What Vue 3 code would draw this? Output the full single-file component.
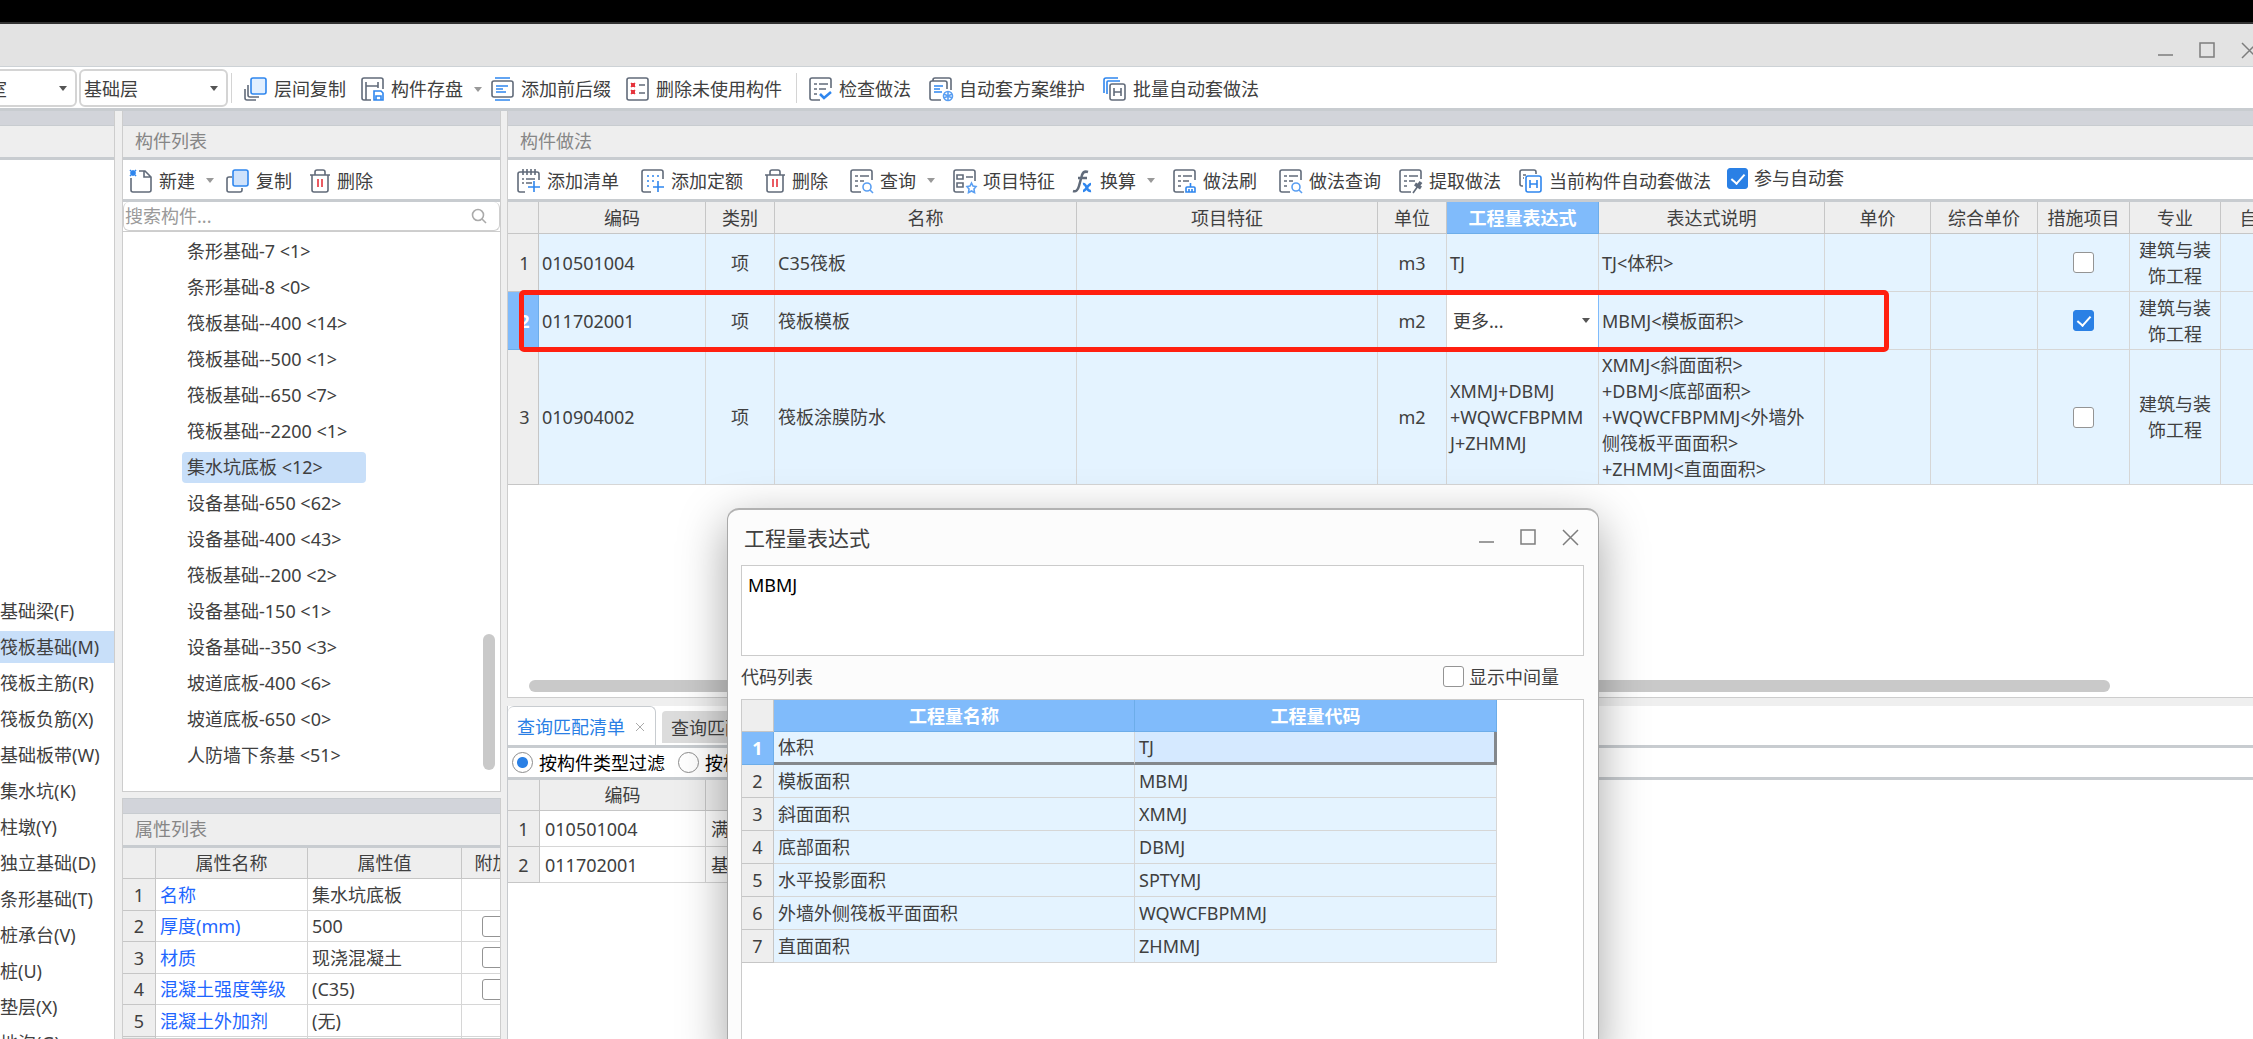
<script setup>
import { ref } from 'vue'

const icons = {
  layers: '<path d="M1 12v9a2 2 0 0 0 2 2h9M4 8v10a2 2 0 0 0 2 2h9" class="g"/><rect x="7" y="1" width="15" height="16" rx="2" class="b" fill="#e1efff"/>',
  save: '<path d="M22 12V3a2 2 0 0 0-2-2H3a2 2 0 0 0-2 2v18a2 2 0 0 0 2 2h7M5 5v18M5 9h12M17 5v6" class="g"/><path d="M13 14h7l2 2v7h-9zM15 23v-4h5v4" class="b"/>',
  affix: '<rect x="1" y="4" width="21" height="16" rx="2" class="g"/><path d="M4 1h15M4 23h15M5 9h12M5 12h7M5 15h10" class="b"/>',
  unused: '<rect x="1" y="1" width="21" height="22" rx="2" class="g"/><path d="M13 8h6M13 16h6" class="g"/><path d="M5 6l4 4M9 6l-4 4M5 8h4M7 6v4M5 13l4 4M9 13l-4 4M5 15h4M7 13v4" class="r"/>',
  check: '<path d="M22 11V3a2 2 0 0 0-2-2H3a2 2 0 0 0-2 2v18a2 2 0 0 0 2 2h8M5 7h3M5 12h3M5 17h3M10 7h9M10 12h7" class="g"/><path d="M11 17l4 4 7-6" class="b thick"/>',
  plan: '<path d="M4 4V3a2 2 0 0 1 2-2h14a2 2 0 0 1 2 2v10M18 12V6a2 2 0 0 0-2-2H3a2 2 0 0 0-2 2v15a2 2 0 0 0 2 2h9" class="g"/><path d="M5 9h9M5 12h6M5 15h8" class="b"/><circle cx="19" cy="19" r="4.5" class="l"/><path d="M19 14v10M15 17l8 4M23 17l-8 4" class="l"/>',
  batch: '<path d="M1 16V3a2 2 0 0 1 2-2h12M4 17V5a1 1 0 0 1 1-1h12" class="b"/><rect x="7" y="7" width="15" height="16" rx="2" class="g" fill="#fff"/><path d="M11 11v8M18 11v8M11 15h7" class="g"/>',
  create: '<path d="M2 9v12a2 2 0 0 0 2 2h16a2 2 0 0 0 2-2V8l-6-6H10M15 2v6h7" class="g"/><path d="M1 1l6 6M7 1L1 7M4 1v6M1 4h6" class="b"/>',
  copy: '<path d="M6 8H3a2 2 0 0 0-2 2v11a2 2 0 0 0 2 2h11a2 2 0 0 0 2-2v-2" class="g"/><rect x="7" y="1" width="15" height="16" rx="2" class="b" fill="#cfe2fb"/>',
  trash: '<path d="M0 6h20M5 6V3a2 2 0 0 1 2-2h6a2 2 0 0 1 2 2v3M2 6v15a2 2 0 0 0 2 2h12a2 2 0 0 0 2-2V6" class="g"/><path d="M8 10v8M12 10v8" class="r"/>',
  addList: '<path d="M22 11V5a2 2 0 0 0-2-2H3a2 2 0 0 0-2 2v16a2 2 0 0 0 2 2h5M6 0v6M10 0v6M14 0v6M18 0v6M5 10h2M9 10h9M5 14h2M9 14h6" class="g"/><path d="M17 12v11M11 18h12" class="b"/>',
  addQuota: '<path d="M22 10V3a2 2 0 0 0-2-2H3a2 2 0 0 0-2 2v18a2 2 0 0 0 2 2h7" class="g"/><path d="M17 12v11M12 18h11M6 7h2M11 7h2M16 7h2M6 12h2M11 12h2M6 17h2" class="b"/>',
  query: '<path d="M22 11V3a2 2 0 0 0-2-2H3a2 2 0 0 0-2 2v18a2 2 0 0 0 2 2h8M5 7h3M5 12h3M5 17h3M10 7h9M10 12h4" class="g"/><circle cx="17" cy="18" r="4" class="l"/><path d="M20 21l3 3" class="l"/>',
  feature: '<path d="M22 12V3a2 2 0 0 0-2-2H3a2 2 0 0 0-2 2v18a2 2 0 0 0 2 2h8M13 8h7" class="g"/><path d="M4 6h6v4H4zM4 14h6v4H4z" class="g"/><path d="M18.500 14l1.500 3 3 .5-2 2.500.5 3.500-3-1.500-3 1.500.5-3.500-2-2.500 3-.5z" class="l"/>',
  brush: '<path d="M22 11V3a2 2 0 0 0-2-2H3a2 2 0 0 0-2 2v18a2 2 0 0 0 2 2h8M5 7h3M5 12h3M5 17h3M10 7h9M10 12h6" class="g"/><path d="M17.500 14v4M13 23v-4a1 1 0 0 1 1-1h7a1 1 0 0 1 1 1v4zM16 20v3M19 20v3" class="b"/>',
  pick: '<path d="M22 10V3a2 2 0 0 0-2-2H3a2 2 0 0 0-2 2v18a2 2 0 0 0 2 2h9M5 7h3M5 12h3M5 17h3M10 7h9M10 12h6" class="g"/><path d="M14 24l5-7" class="g"/><path d="M16 15l6 4M19 17l3-4" class="g thicker"/>',
  current: '<path d="M17 5V3a2 2 0 0 0-2-2H3a2 2 0 0 0-2 2v12a2 2 0 0 0 2 2h1M4 6h3M4 9h1" class="g"/><rect x="7" y="7" width="15" height="16" rx="2" class="b" fill="#fff"/><path d="M11 11v8M18 11v8M11 15h7" class="b"/>',
  fx: '<path d="M0 22c3 1 5-1 6-5l3-11c1-3 3-4 6-3M5 9h9" class="g thick"/><path d="M10 15c4-1 3 8 8 7M18 15c-3 0-5 7-8 7" class="b thick"/>',
}

const topA = [
  { icon: 'layers', text: '层间复制' },
  { icon: 'save', text: '构件存盘', drop: true },
  { icon: 'affix', text: '添加前后缀' },
  { icon: 'unused', text: '删除未使用构件' },
]
const topB = [
  { icon: 'check', text: '检查做法' },
  { icon: 'plan', text: '自动套方案维护' },
  { icon: 'batch', text: '批量自动套做法' },
]
const listTools = [
  { icon: 'create', text: '新建', drop: true },
  { icon: 'copy', text: '复制' },
  { icon: 'trash', text: '删除', w: 20 },
]
const mainTools = [
  { icon: 'addList', text: '添加清单', wide: true },
  { icon: 'addQuota', text: '添加定额', wide: true },
  { icon: 'trash', text: '删除', w: 20, wide: true },
  { icon: 'query', text: '查询', drop: true },
  { icon: 'feature', text: '项目特征' },
  { icon: 'fx', text: '换算', drop: true, w: 20 },
  { icon: 'brush', text: '做法刷', wide: true },
  { icon: 'query', text: '做法查询' },
  { icon: 'pick', text: '提取做法' },
  { icon: 'current', text: '当前构件自动套做法' },
]

const types = ['基础梁(F)', '筏板基础(M)', '筏板主筋(R)', '筏板负筋(X)', '基础板带(W)', '集水坑(K)', '柱墩(Y)', '独立基础(D)', '条形基础(T)', '桩承台(V)', '桩(U)', '垫层(X)', '地沟(G)']
const members = ['条形基础-7 <1>', '条形基础-8 <0>', '筏板基础--400 <14>', '筏板基础--500 <1>', '筏板基础--650 <7>', '筏板基础--2200 <1>', '集水坑底板 <12>', '设备基础-650 <62>', '设备基础-400 <43>', '筏板基础--200 <2>', '设备基础-150 <1>', '设备基础--350 <3>', '坡道底板-400 <6>', '坡道底板-650 <0>', '人防墙下条基 <51>']
const props = [
  ['名称', '集水坑底板', false],
  ['厚度(mm)', '500', true],
  ['材质', '现浇混凝土', true],
  ['混凝土强度等级', '(C35)', true],
  ['混凝土外加剂', '(无)', false],
  ['泵送类型', '(混凝土泵)', false],
]

const cols = [31, 167, 69, 302, 301, 69, 152, 226, 106, 107, 92, 91, 92]
const heads = ['', '编码', '类别', '名称', '项目特征', '单位', '工程量表达式', '表达式说明', '单价', '综合单价', '措施项目', '专业', '自动套']
const rows = ref([
  { code: '010501004', name: 'C35筏板', unit: 'm3', expr: ['TJ'], desc: ['TJ<体积>'], measure: false },
  { code: '011702001', name: '筏板模板', unit: 'm2', expr: null, desc: ['MBMJ<模板面积>'], measure: true },
  { code: '010904002', name: '筏板涂膜防水', unit: 'm2', expr: ['XMMJ+DBMJ', '+WQWCFBPMM', 'J+ZHMMJ'], desc: ['XMMJ<斜面面积>', '+DBMJ<底部面积>', '+WQWCFBPMMJ<外墙外', '侧筏板平面面积>', '+ZHMMJ<直面面积>'], measure: false },
])
const matches = [['010501004', '满堂基础'], ['011702001', '基础']]
const codes = [['体积', 'TJ'], ['模板面积', 'MBMJ'], ['斜面面积', 'XMMJ'], ['底部面积', 'DBMJ'], ['水平投影面积', 'SPTYMJ'], ['外墙外侧筏板平面面积', 'WQWCFBPMMJ'], ['直面面积', 'ZHMMJ']]

const auto = ref(true)
const filter = ref('type')
const middle = ref(false)
const expression = ref('MBMJ')
const keyword = ref('')
</script>

<template>
  <div class="app">
    <div class="black"></div>
    <header class="titlebar">
      <div class="winbtns">
        <button aria-label="最小化"><svg width="17" height="17"><path d="M1 13h15" /></svg></button>
        <button aria-label="最大化"><svg width="17" height="17"><rect x="1" y="1" width="14" height="14" /></svg></button>
        <button aria-label="关闭"><svg width="17" height="17"><path d="M1 1l15 15M16 1L1 16" /></svg></button>
      </div>
    </header>

    <nav class="topbar">
      <span class="sel sel-a"><select aria-label="区域"><option>地下室</option></select><i class="caret dark"></i></span>
      <span class="sel sel-b"><select aria-label="楼层"><option>基础层</option></select><i class="caret dark"></i></span>
      <span class="sep"></span>
      <div class="tools tight">
        <button v-for="t in topA" :key="t.text" class="tool">
          <svg class="ico" width="23" height="24" viewBox="0 0 23 24" v-html="icons[t.icon]"></svg>{{ t.text }}<i v-if="t.drop" class="caret"></i>
        </button>
      </div>
      <span class="sep mid"></span>
      <div class="tools">
        <button v-for="t in topB" :key="t.text" class="tool">
          <svg class="ico" width="23" height="24" viewBox="0 0 23 24" v-html="icons[t.icon]"></svg>{{ t.text }}
        </button>
      </div>
    </nav>

    <div class="body">
      <aside class="types">
        <div class="grip"></div>
        <div class="head"></div>
        <ul>
          <li v-for="(t, i) in types" :key="t"><span :class="{ on: i === 1 }">{{ t }}</span></li>
        </ul>
      </aside>

      <section class="side">
        <div class="panel members">
          <div class="grip"></div>
          <h2 class="head">构件列表</h2>
          <div class="bar tools compact">
            <button v-for="t in listTools" :key="t.text" class="tool">
              <svg class="ico" :width="t.w || 23" height="24" :viewBox="`0 0 ${t.w || 23} 24`" v-html="icons[t.icon]"></svg>{{ t.text }}<i v-if="t.drop" class="caret"></i>
            </button>
          </div>
          <div class="search">
            <input v-model="keyword" type="text" placeholder="搜索构件..." aria-label="搜索构件" />
            <svg width="16" height="16" viewBox="0 0 16 16"><circle cx="7" cy="7" r="5.500" /><path d="M11 11l4 4" /></svg>
          </div>
          <div class="tree">
            <ul>
              <li v-for="(m, i) in members" :key="m"><span :class="{ on: i === 6 }">{{ m }}</span></li>
            </ul>
            <div class="vscroll"></div>
          </div>
        </div>
        <div class="panel props">
          <div class="grip"></div>
          <h2 class="head">属性列表</h2>
          <table class="grid ptable">
            <colgroup><col style="width: 33px" /><col style="width: 152px" /><col style="width: 154px" /><col style="width: 62px" /></colgroup>
            <thead><tr><th></th><th>属性名称</th><th>属性值</th><th>附加</th></tr></thead>
            <tbody>
              <tr v-for="(p, i) in props" :key="p[0]">
                <th>{{ i + 1 }}</th><td class="blue">{{ p[0] }}</td><td>{{ p[1] }}</td>
                <td class="c"><input v-if="p[2]" type="checkbox" class="chk" :aria-label="'附加' + p[0]" /></td>
              </tr>
            </tbody>
          </table>
        </div>
      </section>

      <main class="main">
        <div class="panel works">
          <div class="grip"></div>
          <h2 class="head">构件做法</h2>
          <div class="bar tools">
            <button v-for="t in mainTools" :key="t.text" class="tool" :class="{ wide: t.wide }">
              <svg class="ico" :width="t.w || 23" height="24" :viewBox="`0 0 ${t.w || 23} 24`" v-html="icons[t.icon]"></svg>{{ t.text }}<i v-if="t.drop" class="caret"></i>
            </button>
            <label class="auto"><input v-model="auto" type="checkbox" class="chk" />参与自动套</label>
          </div>
          <div class="scroller">
            <table class="grid wtable">
              <colgroup><col v-for="(w, i) in cols" :key="i" :style="{ width: w + 'px' }" /></colgroup>
              <thead><tr><th v-for="(h, i) in heads" :key="i" :class="{ hot: i === 6 }">{{ h }}</th></tr></thead>
              <tbody>
                <tr v-for="(r, i) in rows" :key="r.code">
                  <th :class="{ hot: i === 1 }">{{ i + 1 }}</th>
                  <td>{{ r.code }}</td>
                  <td class="c">项</td>
                  <td>{{ r.name }}</td>
                  <td></td>
                  <td class="c">{{ r.unit }}</td>
                  <td v-if="r.expr"><div v-for="e in r.expr" :key="e">{{ e }}</div></td>
                  <td v-else class="edit">
                    <span class="sel"><select aria-label="工程量表达式"><option>更多...</option></select><i class="caret dark"></i></span>
                  </td>
                  <td><div v-for="d in r.desc" :key="d">{{ d }}</div></td>
                  <td></td>
                  <td></td>
                  <td class="c"><input v-model="r.measure" type="checkbox" class="chk" aria-label="措施项目" /></td>
                  <td class="c">建筑与装<br />饰工程</td>
                  <td></td>
                </tr>
              </tbody>
            </table>
            <div class="mark"></div>
            <div class="hscroll"></div>
          </div>
        </div>

        <div class="lower">
          <div class="tabs">
            <button class="tab on">查询匹配清单<svg width="10" height="10"><path d="M1 1l8 8M9 1l-8 8" /></svg></button>
            <button class="tab">查询匹配定额</button>
          </div>
          <div class="filters">
            <label><input v-model="filter" type="radio" value="type" name="f" />按构件类型过滤</label>
            <label><input v-model="filter" type="radio" value="prop" name="f" />按构件属性过滤</label>
          </div>
          <table class="grid mtable">
            <colgroup><col style="width: 32px" /><col style="width: 166px" /><col style="width: 302px" /></colgroup>
            <thead><tr><th></th><th>编码</th><th>名称</th></tr></thead>
            <tbody>
              <tr v-for="(m, i) in matches" :key="m[0]"><th>{{ i + 1 }}</th><td>{{ m[0] }}</td><td>{{ m[1] }}</td></tr>
            </tbody>
          </table>
        </div>
      </main>
    </div>

    <div class="dialog" role="dialog" aria-label="工程量表达式">
      <div class="dtitle">
        <h1>工程量表达式</h1>
        <div class="winbtns">
          <button aria-label="最小化"><svg width="17" height="17"><path d="M1 13h15" /></svg></button>
          <button aria-label="最大化"><svg width="17" height="17"><rect x="1" y="1" width="14" height="14" /></svg></button>
          <button aria-label="关闭"><svg width="17" height="17"><path d="M1 1l15 15M16 1L1 16" /></svg></button>
        </div>
      </div>
      <textarea v-model="expression" aria-label="表达式" spellcheck="false"></textarea>
      <div class="drow">
        <span>代码列表</span>
        <label><input v-model="middle" type="checkbox" class="chk" />显示中间量</label>
      </div>
      <div class="dlist">
        <table class="grid dtable">
          <colgroup><col style="width: 32px" /><col style="width: 361px" /><col style="width: 362px" /></colgroup>
          <thead><tr><th></th><th class="hot">工程量名称</th><th class="hot">工程量代码</th></tr></thead>
          <tbody>
            <tr v-for="(c, i) in codes" :key="c[1]" :class="{ cur: i === 0 }">
              <th :class="{ hot: i === 0 }">{{ i + 1 }}</th><td>{{ c[0] }}</td><td>{{ c[1] }}</td>
            </tr>
          </tbody>
        </table>
      </div>
    </div>
  </div>
</template>

<style>
body { margin: 0; overflow: hidden; }
</style>

<style scoped>
.app, .app * { box-sizing: border-box; }
.app {
  position: relative; display: flex; flex-direction: column; height: 100vh; overflow: hidden;
  background: #efefef; color: #404040;
  font: 18px/26px "Noto Sans", "Noto Sans CJK SC", sans-serif;
}
button, select, input, textarea { font: inherit; color: inherit; margin: 0; }
button { border: 0; background: none; padding: 0; white-space: nowrap; }
h1, h2 { margin: 0; font-weight: 400; font-size: 18px; }
ul { list-style: none; margin: 0; padding: 0; }

.black { flex: none; height: 24px; background: #000; border-bottom: 2px solid #333; }
.titlebar { flex: none; height: 43px; background: #e3e3e3; border-bottom: 1px solid #cdd2d6; display: flex; justify-content: flex-end; padding-top: 18px; }
.titlebar .winbtns { margin-right: -5px; }
.winbtns { display: flex; gap: 25px; }
.winbtns button { height: 17px; width: 17px; }
.winbtns svg { display: block; fill: none; stroke: #7d7d7d; stroke-width: 1.5; }

.topbar { flex: none; display: flex; align-items: center; height: 44px; padding-top: 1px; background: #fff; border-bottom: 3px solid #c8ccd0; }
.sel { position: relative; display: flex; align-items: center; }
.sel select { appearance: none; border: 0; background: none; width: 100%; height: 100%; outline: 0; padding: 0 3px; }
.sel .caret { position: absolute; right: 8px; }
.topbar .sel { height: 38px; border: 2px solid #d4d4d4; border-radius: 6px; background: #fff; }
.sel-a { width: 129px; margin-left: -52px; }
.sel-b { width: 149px; margin-left: 2px; }
.topbar .sel select { padding: 2px 3px 0; }
.sep { width: 1px; height: 30px; background: #d4d4d4; margin: 0 12px 0 3px; }
.sep.mid { margin: 0 12px 0 14px; }
.topbar .tool { padding-top: 2px; }
.caret { display: inline-block; width: 0; height: 0; border: 4px solid transparent; border-top: 5px solid #999; border-bottom: 0; }
.caret.dark { border-top-color: #555; }

.tools { display: flex; align-items: center; gap: 18px; }
.tools.tight { gap: 15px; }
.tool { display: flex; align-items: center; height: 26px; }
.tool .caret { margin-left: 11px; }
.tight .caret, .compact .caret { margin-right: -6px; }
.tool.wide { margin-right: 4px; }
.ico { margin-right: 7px; fill: none; overflow: visible; }
.ico :deep(.g) { stroke: #616b7a; stroke-width: 1.6; }
.ico :deep(.b) { stroke: #2f86ee; stroke-width: 1.6; }
.ico :deep(.l) { stroke: #5a9ff2; stroke-width: 1.6; }
.ico :deep(.r) { stroke: #e5333c; stroke-width: 1.6; }
.ico :deep(.thick) { stroke-width: 2.5; }
.ico :deep(.thicker) { stroke-width: 3.5; }

.body { flex: 1; min-height: 0; display: flex; gap: 7px; }
.grip { flex: none; height: 15px; background: #d2d4da; border-bottom: 1px solid #c8ccd0; }
.head { flex: none; height: 34px; border-bottom: 3px solid #c8ccd0; padding-left: 12px; line-height: 30px; color: #868686; background: #eee; }
.panel { border: 1px solid #cdcdcd; border-top: 0; background: #fff; display: flex; flex-direction: column; overflow: hidden; }
.bar { flex: none; height: 42px; border-bottom: 3px solid #c8ccd0; padding: 2px 0 0 6px; }

.types { flex: none; width: 115px; background: #fff; border-right: 1px solid #cdcdcd; overflow: hidden; white-space: nowrap; }
.types ul { padding-top: 433px; }
.types li { height: 36px; padding: 2px 0; }
.types span { display: block; line-height: 32px; }
.types .on { background: #c8dff9; }

.side { flex: none; width: 379px; display: flex; flex-direction: column; gap: 6px; min-height: 0; }
.members { flex: none; }
.search { flex: none; display: flex; align-items: center; height: 29px; padding: 0 12px 0 1px; border: 1px solid #cfcfcf; border-top: 0; border-radius: 6px; }
.search input { flex: 1; min-width: 0; border: 0; padding: 0; outline: 0; background: none; height: 26px; }
.search input::placeholder { color: #9a9a9a; opacity: 1; }
.search svg { fill: none; stroke: #aaa; stroke-width: 1.6; }
.tree { display: flex; justify-content: space-between; align-items: flex-end; padding: 2px 5px 17px 59px; border-top: 1px solid #cdcdcd; }
.tree li { height: 36px; padding: 2px 0; }
.tree span { display: block; width: 184px; line-height: 31px; padding-left: 5px; border-radius: 4px; white-space: pre; }
.tree .on { background: #c8dff9; }
.vscroll { width: 12px; height: 136px; margin-bottom: 4px; border-radius: 6px; background: #c9c9c9; }
.props { flex: 1; min-height: 0; border-top: 1px solid #c8ccd0; }

.grid { border-collapse: separate; border-spacing: 0; table-layout: fixed; width: 0; }
.grid th, .grid td { border: 0 solid #d6d6d6; border-width: 0 1px 1px 0; padding: 0; overflow: hidden; white-space: nowrap; text-align: left; }
.grid th { background: #eee; font-weight: 400; text-align: center; border-color: #c6c6c6; }
.grid .hot { background: #80bbfb; color: #fff; font-weight: 700; border-color: #6dade9; }
.grid .c { text-align: center; }
.grid .chk { display: block; margin: 0 auto; }

.ptable tr { height: 32px; }
.ptable tr:nth-child(even), .ptable thead tr { height: 31px; }
.grid.ptable td { padding-left: 4px; line-height: 24px; }
.grid.ptable .c { padding: 0; }
.blue { color: #1e66ff; }

.chk { appearance: none; position: relative; width: 21px; height: 21px; border: 1px solid #949494; border-radius: 3px; background: #fff; flex: none; }
.chk:checked { background: #2a80e5; border-color: #2a80e5; }
.chk:checked::after { content: ""; position: absolute; left: 6px; top: 2px; width: 6px; height: 11px; border: solid #fff; border-width: 0 2px 2px 0; transform: rotate(42deg); }

.main { flex: 1; min-width: 0; display: flex; flex-direction: column; gap: 8px; margin-left: -1px; }
.works { flex: none; border-right: 0; }
.works .bar { padding-left: 9px; }
.auto { display: flex; align-items: center; gap: 6px; margin: -5px 0 0 -2px; height: 26px; white-space: nowrap; }
.scroller { position: relative; overflow: hidden; }
.grid.wtable td { background: #e4f3ff; padding-left: 3px; }
.grid.wtable .c { padding: 0; }
.wtable thead tr { height: 32px; }
.wtable tbody tr { height: 58px; }
.wtable tbody tr:last-child { height: 135px; }
.grid.wtable tbody th { padding-left: 3px; }
.grid.wtable .edit { background: #fff; padding: 0; border-color: #80bbfb; }
.edit .sel { height: 50px; }
.edit .sel select { padding: 0 6px; }
.mark { position: absolute; left: 11px; top: 88px; width: 1370px; height: 62px; border: 5px solid #ff1f10; border-radius: 5px; }
.hscroll { width: calc(100% - 164px); height: 12px; margin: 195px 0 5px 21px; border-radius: 6px; background: #c9c9c9; }

.lower { flex: 1; min-height: 0; background: #fff; border-left: 1px solid #c6c9cd; overflow: hidden; }
.tabs { display: flex; align-items: flex-end; gap: 6px; height: 42px; border-bottom: 3px solid #c8ccd0; }
.tab { height: 32px; padding: 2px 9px 0; background: #dcdcdc; border-radius: 4px 4px 0 0; margin-bottom: 2px; }
.tab.on { display: flex; align-items: center; gap: 10px; height: 39px; width: 148px; margin: 0; background: #fff; color: #2a7fe5; border: solid #c8ccd0; border-width: 1px 1px 0 0; border-radius: 6px 6px 0 0; }
.tab svg { stroke: #aaa; fill: none; }
.filters { display: flex; align-items: center; gap: 13px; height: 32px; padding-left: 4px; border-bottom: 3px solid #c8ccd0; color: #000; }
.filters label { display: flex; align-items: center; gap: 6px; }
.filters input { appearance: none; width: 21px; height: 21px; border: 1px solid #8c8c8c; border-radius: 50%; background: #fff; }
.filters input:checked { background: radial-gradient(circle, #2a80e5 0 5px, #fff 6px); }
.mtable thead tr { height: 31px; }
.mtable tbody tr { height: 36px; }
.grid.mtable td { padding-left: 5px; }

.dialog {
  position: absolute; left: 727px; top: 508px; bottom: -20px; width: 872px; padding: 0 14px 0 13px;
  display: flex; flex-direction: column; background: #fcfcfc;
  border: 1px solid #a8a8a8; border-top: 2px solid #b2b2b2; border-radius: 12px;
  box-shadow: 0 14px 48px rgba(0, 0, 0, 0.36);
}
.dtitle { flex: none; display: flex; justify-content: space-between; align-items: center; height: 55px; padding: 0 5px 0 3px; }
.dtitle h1 { font-size: 21px; line-height: 28px; }
textarea { flex: none; height: 91px; resize: none; border: 1px solid #cbcbcb; outline: 0; background: #fff; color: #000; padding: 6px; line-height: 26px; }
.drow { flex: none; display: flex; justify-content: space-between; align-items: center; height: 43px; padding: 0 25px 2px 0; }
.drow label { display: flex; align-items: center; gap: 5px; }
.dlist { flex: 1; min-height: 0; border: 1px solid #cbcbcb; background: #fff; overflow: hidden; }
.dtable tr { height: 33px; }
.dtable thead tr { height: 32px; }
.grid.dtable td { background: #e4f3ff; padding-left: 4px; line-height: 24px; }
.grid.dtable .cur td { border-bottom: 3px solid #84888c; }
.grid.dtable .cur td:last-child { background: #d5e9ff; border-right: 3px solid #84888c; }
</style>
